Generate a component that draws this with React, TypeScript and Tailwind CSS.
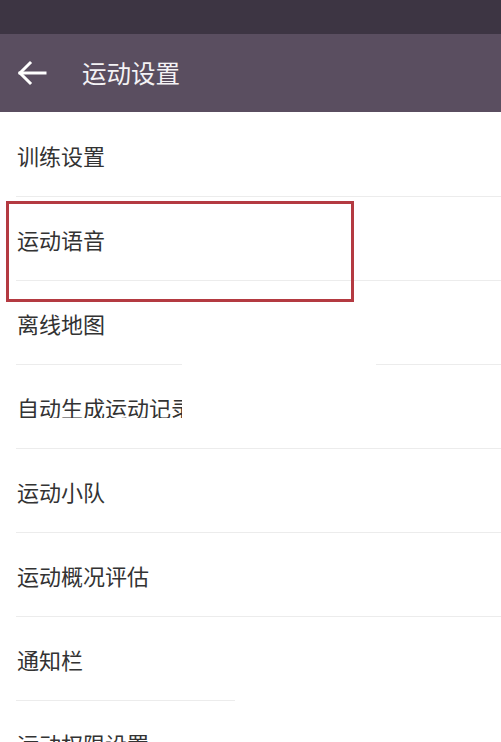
import React from "react";

type Row = {
  label: string;
  clip?: boolean;
  divider: "full" | "gap" | "short" | "none";
};

const rows: Row[] = [
  { label: "训练设置", divider: "full" },
  { label: "运动语音", divider: "full" },
  { label: "离线地图", divider: "gap" },
  { label: "自动生成运动记录", clip: true, divider: "full" },
  { label: "运动小队", divider: "full" },
  { label: "运动概况评估", divider: "full" },
  { label: "通知栏", divider: "short" },
  { label: "运动权限设置", divider: "none" },
];

const Divider = ({ kind }: { kind: Row["divider"] }) => {
  if (kind === "none") return null;
  if (kind === "gap") {
    return (
      <div className="flex h-px">
        <div className="ml-[16px] w-[166px] bg-[#ececec]" />
        <div className="ml-[194px] flex-1 bg-[#ececec]" />
      </div>
    );
  }
  if (kind === "short") {
    return (
      <div className="flex h-px">
        <div className="ml-[16px] w-[219px] bg-[#ececec]" />
      </div>
    );
  }
  return <div className="ml-[16px] h-px bg-[#ececec]" />;
};

const App = () => {
  return (
    <div
      className="relative w-[501px] h-[742px] overflow-hidden bg-white"
      style={{ fontFamily: '"Noto Sans CJK SC", "Noto Sans", sans-serif' }}
    >
      <div className="h-[34px] bg-[#3d3543]" />
      <div className="flex h-[78px] items-center bg-[#5a4e60]">
        <svg
          className="ml-[16px] h-[32px] w-[32px]"
          viewBox="0 0 32 32"
          fill="none"
          stroke="#ffffff"
          strokeWidth="3"
          strokeLinecap="square"
        >
          <path d="M4 16h25" />
          <path d="M14 6L4 16l10 10" />
        </svg>
        <span className="ml-[34px] text-[24.5px] leading-none text-[#f4f2f5]">
          运动设置
        </span>
      </div>

      <div className="flex flex-col pt-px">
        {rows.map((r, i) => (
          <div key={i} className="flex flex-col">
            <div className="flex h-[83px] items-center pl-[17px]">
              {r.clip ? (
                <div className="w-[165px] overflow-hidden whitespace-nowrap text-[22px] leading-none text-[#333333]">
                  {r.label}
                </div>
              ) : (
                <span className="text-[22px] leading-none text-[#333333]">
                  {r.label}
                </span>
              )}
            </div>
            <Divider kind={r.divider} />
          </div>
        ))}
      </div>

      <div className="absolute left-[6px] top-[201px] h-[101px] w-[348px] border-[3px] border-[#b43a41]" />
    </div>
  );
};

export default App;
